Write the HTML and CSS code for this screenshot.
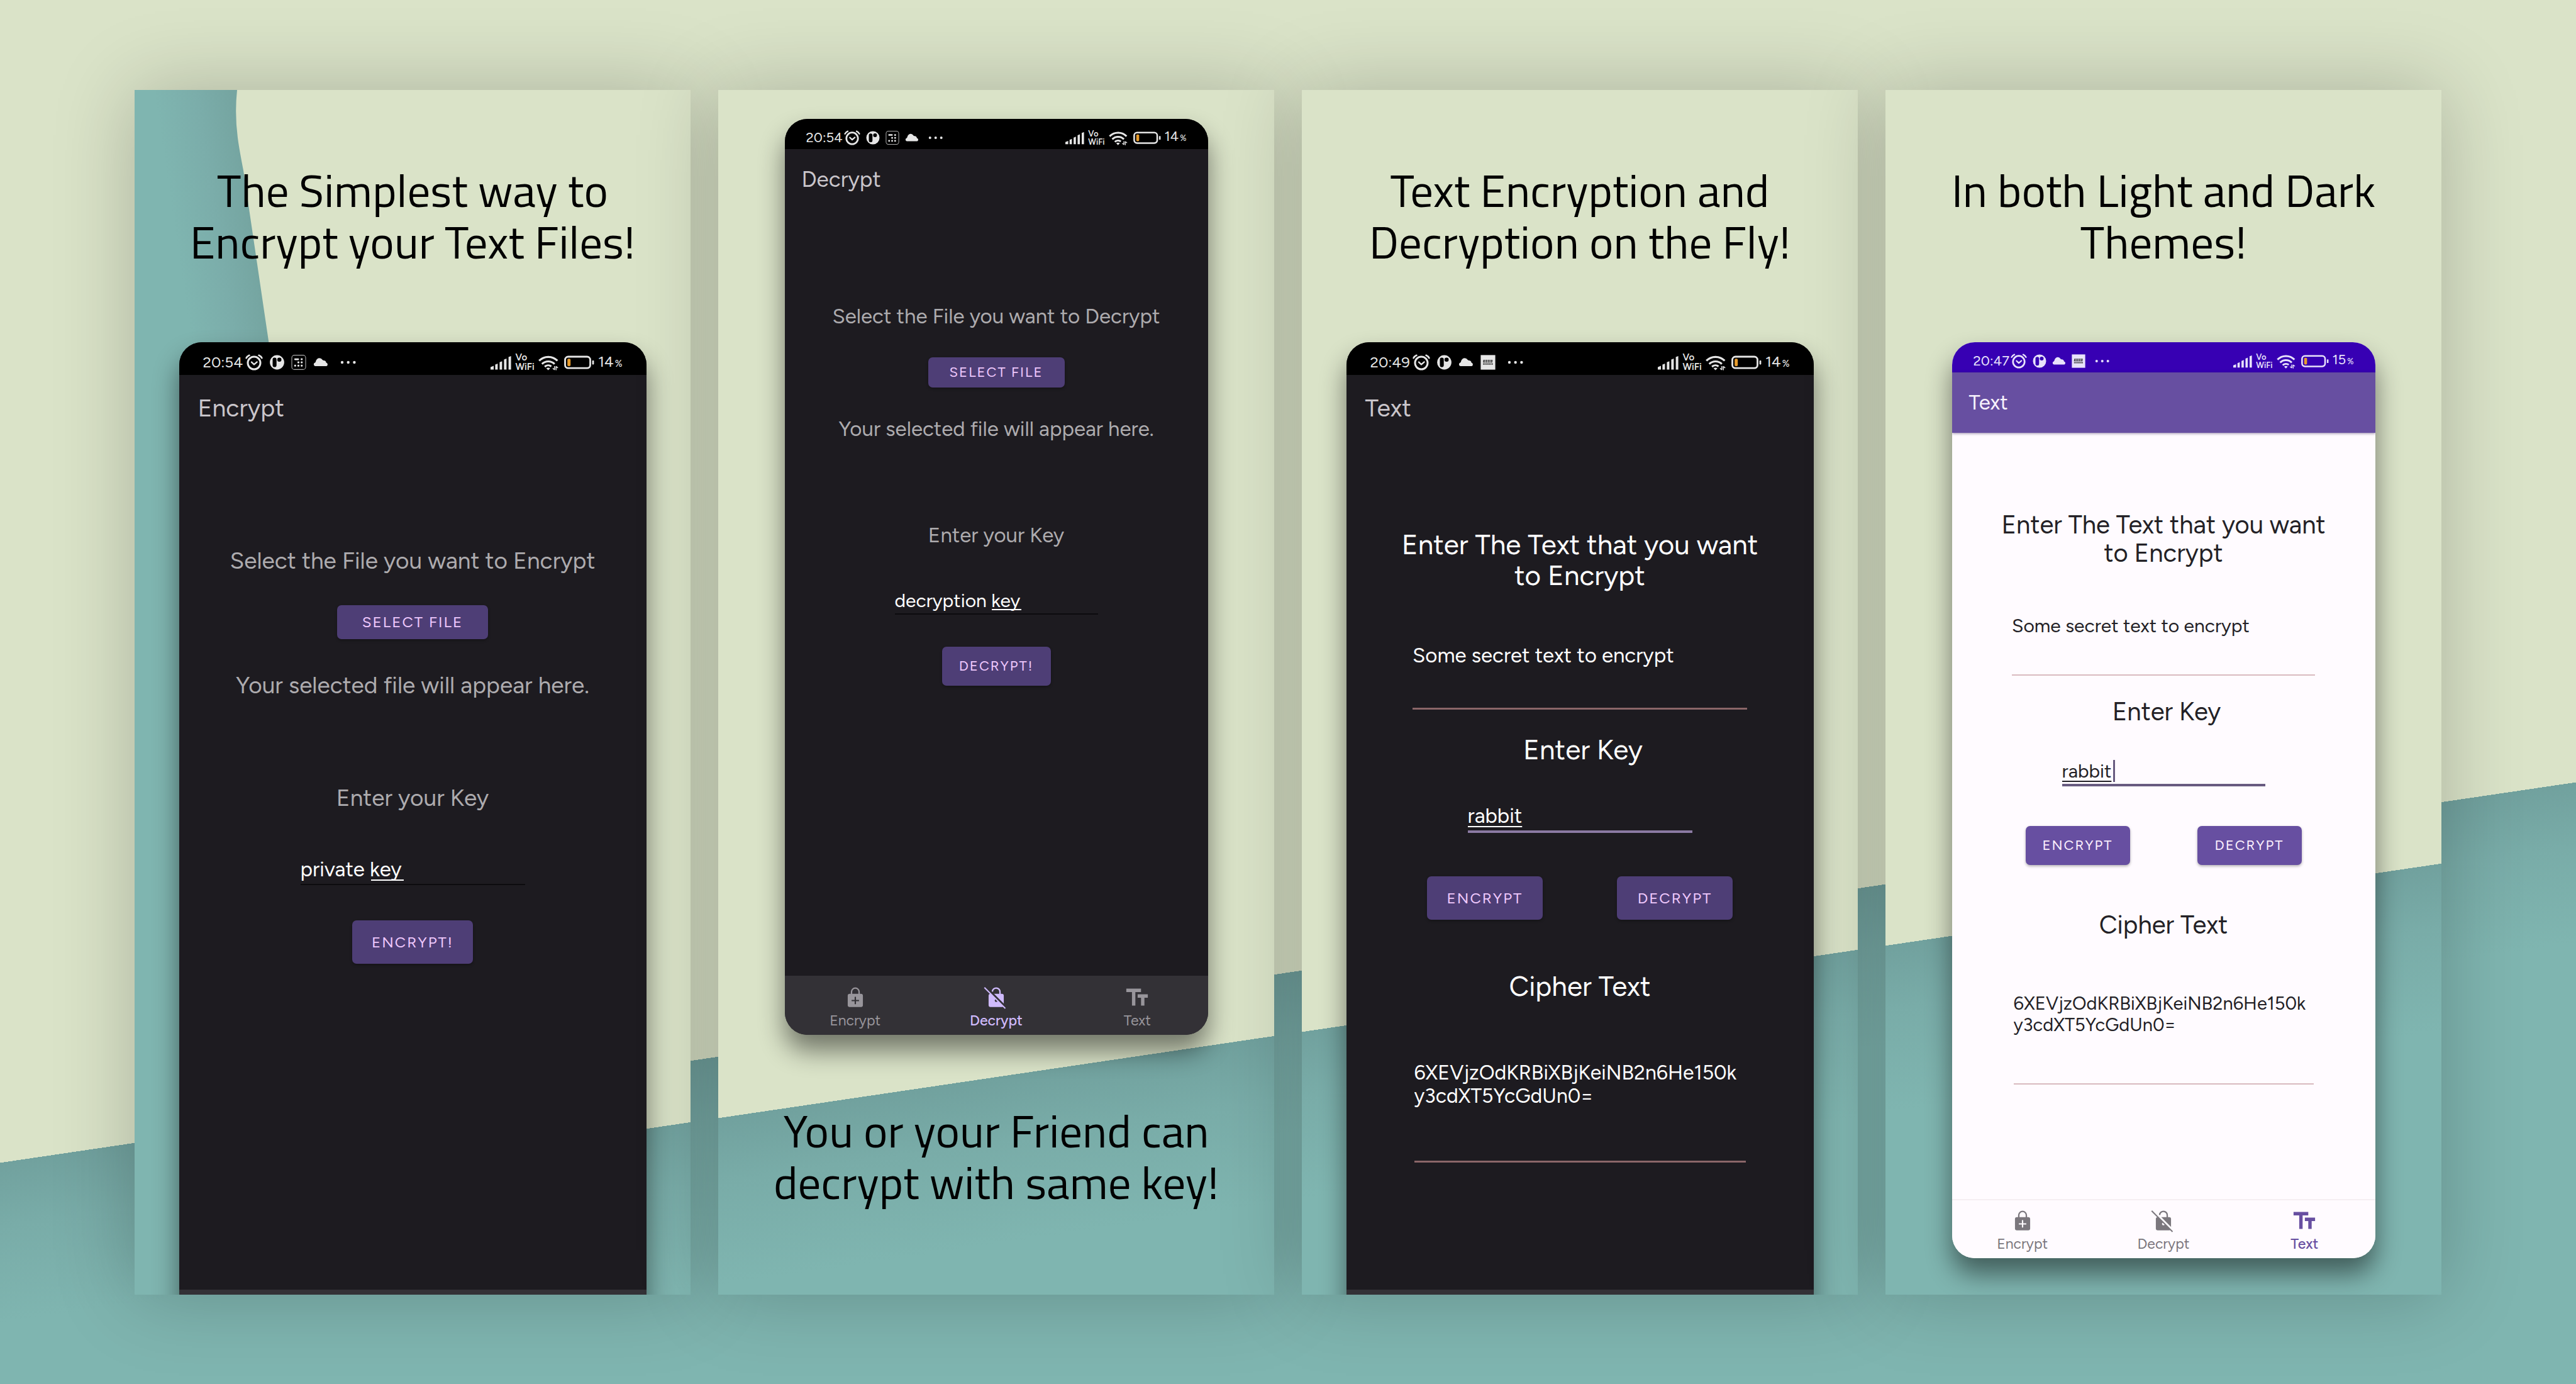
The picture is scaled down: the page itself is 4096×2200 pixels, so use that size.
FILE: index.html
```html
<!DOCTYPE html>
<html lang="en">
<head>
<meta charset="utf-8">
<meta name="viewport" content="width=device-width, initial-scale=1">
<title>Encrypt your Text Files</title>
<link rel="stylesheet" href="styles.css">
</head>
<body>
<svg class="sprite" aria-hidden="true">
  <symbol id="i-alarm" viewBox="0 0 28 26">
    <g fill="none" stroke="currentColor" stroke-linecap="round" stroke-linejoin="round">
      <circle cx="14" cy="14" r="10" stroke-width="3"/>
      <path d="M1.6 6.2Q3.2 3.2 6.4 1.8M26.4 6.2Q24.8 3.2 21.6 1.8" stroke-width="2.6"/>
      <path d="M10 12.6l4 3.8 4.6-4" stroke-width="2.4"/>
    </g>
  </symbol>
  <symbol id="i-disc" viewBox="0 0 23 26">
    <path fill="currentColor" fill-rule="evenodd" d="M11.5 1.6a11.4 11.4 0 1 1 0 22.8a11.4 11.4 0 0 1 0-22.8zM7.6 5.6a3.1 3.1 0 0 0-3.1 3.1v8.8a3.1 3.1 0 0 0 6.2 0V8.7a3.1 3.1 0 0 0-3.1-3.1zM15.2 5.4a3.3 3.3 0 1 0 0 6.6a3.3 3.3 0 0 0 0-6.6z"/>
  </symbol>
  <symbol id="i-calc" viewBox="0 0 24 26">
    <rect x="1" y="1.6" width="22" height="22.8" rx="4" fill="none" stroke="currentColor" stroke-width="1.1" opacity=".75"/>
    <g fill="currentColor">
      <rect x="5" y="6.8" width="7.4" height="2.6" rx=".8"/>
      <rect x="15.2" y="6.6" width="3" height="3" rx="1"/>
      <rect x="10" y="11.6" width="3" height="3" rx="1"/><rect x="15.2" y="11.6" width="3" height="3" rx="1"/>
      <rect x="4.8" y="16.8" width="3" height="3" rx="1"/><rect x="10" y="16.8" width="3" height="3" rx="1"/><rect x="15.2" y="16.8" width="3" height="3" rx="1"/>
    </g>
  </symbol>
  <symbol id="i-cloud" viewBox="0 0 24 26">
    <path fill="currentColor" d="M3 19.1a3 3 0 0 1 .2-5.8C4 12.6 4 10.8 5 9.2A5.4 5.4 0 0 1 14.2 8.6Q15.2 10 16.6 10Q20.4 10.2 20.6 13.6A2.9 2.9 0 0 1 21.2 19.1z"/>
  </symbol>
  <symbol id="i-news" viewBox="0 0 24 26">
    <rect x=".4" y="1.4" width="23.2" height="23.2" fill="currentColor"/>
    <path d="M4.6 9h14.8l-.5 4.2H4z" fill="#222" opacity=".85"/>
    <path d="M7.6 9v4.2M11.4 9v4.2M15.2 9v4.2M5.4 11h13" stroke="currentColor" stroke-width=".7"/>
    <path d="M4.2 15.6h15.6" stroke="#333" stroke-width="2.2" stroke-dasharray="1.6 .7"/>
  </symbol>
  <symbol id="i-more" viewBox="0 0 26 26">
    <g fill="currentColor"><circle cx="3" cy="13" r="2.2"/><circle cx="12.7" cy="13" r="2.2"/><circle cx="22.4" cy="13" r="2.2"/></g>
  </symbol>
  <symbol id="i-signal" viewBox="0 0 33 26">
    <path fill="currentColor" d="M0 20.5l5-2v5.9H0zM7.4 16.6l4-1.6v9.4h-4zM14.4 12.8l4-1.6v13.2h-4zM21.4 8.6l4-1.6v17.4h-4zM28.6 4.6l4-1.6v21.4h-4z"/>
  </symbol>
  <symbol id="i-wifi" viewBox="0 0 32 26">
    <g fill="none" stroke="currentColor" stroke-width="3.2">
      <path d="M1.2 10.4A20.5 20.5 0 0 1 30.4 10.4"/>
      <path d="M5.8 15.6A14.2 14.2 0 0 1 25.8 15.6"/>
      <path d="M10.2 20A8 8 0 0 1 20.6 19.4"/>
    </g>
    <path fill="currentColor" d="M12.6 22.4q3.1-2 6.2 0l-3.1 3.2z"/>
    <path fill="none" stroke="currentColor" stroke-width="1.5" d="M25.8 19v5.8M28.2 25.6v-6.4M26 25l-3-2.6M28.2 19.4l3 2.6"/>
  </symbol>
  <symbol id="i-battery" viewBox="0 0 48 26">
    <rect x="1.5" y="4" width="40" height="18.2" rx="5" fill="none" stroke="currentColor" stroke-width="2.8"/>
    <rect x="44.6" y="10" width="2.8" height="6.4" rx=".8" fill="currentColor"/>
    <rect x="5.2" y="7.2" width="5" height="11.8" rx="1.8" fill="#e89c2c"/>
  </symbol>
  <symbol id="i-lock" viewBox="-1.25 -1.75 26.5 26.5">
    <path fill="none" stroke="currentColor" stroke-width="1.5" d="M8 8.5V6a4 4 0 0 1 8 0v2.5"/>
    <path fill="currentColor" fill-rule="evenodd" d="M6 8h12a2 2 0 0 1 2 2v10a2 2 0 0 1-2 2H6a2 2 0 0 1-2-2V10a2 2 0 0 1 2-2zM11.3 11.2v3.2H8.1v1.4h3.2v3.2h1.4v-3.2h3.2v-1.4h-3.2v-3.2z"/>
  </symbol>
  <symbol id="i-unlock" viewBox="-1.25 -1.75 26.5 26.5">
    <path fill="none" stroke="currentColor" stroke-width="1.5" d="M8 5.8a4 4 0 0 1 8 .2v2.5"/>
    <path fill="currentColor" fill-rule="evenodd" d="M6 8h12a2 2 0 0 1 2 2v10a2 2 0 0 1-2 2H6a2 2 0 0 1-2-2V10a2 2 0 0 1 2-2z"/>
    <circle cx="12" cy="15.2" r="1.5" fill="var(--nav)"/>
    <path d="M2.4 2.4L22.6 22.6" stroke="var(--nav)" stroke-width="2.4"/>
    <path d="M-.4 1.4L21.6 23.4" stroke="currentColor" stroke-width="1.3"/>
  </symbol>
  <symbol id="i-text" viewBox=".9 .4 22.2 22.2">
    <path fill="currentColor" d="M2.5 4v3h5v12h3V7h5V4h-13zm19 5h-9v3h3v7h3v-7h3V9z"/>
  </symbol>
</svg>

<main class="gallery">

  <section class="panel panel-1">
    <svg class="wave" viewBox="0 0 884 1915" preserveAspectRatio="none" aria-hidden="true">
      <defs>
        <linearGradient id="fold" gradientUnits="userSpaceOnUse" x1="163" y1="64" x2="43" y2="82">
          <stop offset="0" stop-color="#75a5a1"/><stop offset=".45" stop-color="#7badaa"/><stop offset="1" stop-color="#7fb5b0"/>
        </linearGradient>
      </defs>
      <path fill="url(#fold)" d="M0 0H163Q159 38 164 76Q166 92 173 128L437 1915H0z"/>
    </svg>
    <h1 class="headline">The Simplest way to Encrypt your Text Files!</h1>
    <article class="phone large dark cropped">
      <header class="status">
        <time>20:54</time>
        <svg class="first"><use href="#i-alarm"/></svg><svg class="w-disc"><use href="#i-disc"/></svg><svg class="w-calc"><use href="#i-calc"/></svg><svg class="w-calc"><use href="#i-cloud"/></svg><svg class="w-more"><use href="#i-more"/></svg>
        <div class="radio"><svg class="w-signal"><use href="#i-signal"/></svg><span class="vo">Vo<br>WiFi</span><svg class="w-wifi"><use href="#i-wifi"/></svg><svg class="w-battery"><use href="#i-battery"/></svg><span class="charge">14<small>%</small></span></div>
      </header>
      <h2 class="appbar">Encrypt</h2>
      <form class="screen file">
        <p class="prompt">Select the File you want to Encrypt</p>
        <button type="button" class="btn pick">SELECT FILE</button>
        <p class="result">Your selected file will appear here.</p>
        <label class="keylabel" for="key1">Enter your Key</label>
        <div class="key"><input id="key1" type="text" value="private key"><i class="compose" style="left:112px;width:52px"></i></div>
        <button type="button" class="btn act">ENCRYPT!</button>
      </form>
      <div class="tabs"></div>
    </article>
  </section>

  <section class="panel panel-2">
    <article class="phone small dark">
      <header class="status">
        <time>20:54</time>
        <svg class="first"><use href="#i-alarm"/></svg><svg class="w-disc"><use href="#i-disc"/></svg><svg class="w-calc"><use href="#i-calc"/></svg><svg class="w-calc"><use href="#i-cloud"/></svg><svg class="w-more"><use href="#i-more"/></svg>
        <div class="radio"><svg class="w-signal"><use href="#i-signal"/></svg><span class="vo">Vo<br>WiFi</span><svg class="w-wifi"><use href="#i-wifi"/></svg><svg class="w-battery"><use href="#i-battery"/></svg><span class="charge">14<small>%</small></span></div>
      </header>
      <h2 class="appbar">Decrypt</h2>
      <form class="screen file">
        <p class="prompt">Select the File you want to Decrypt</p>
        <button type="button" class="btn pick">SELECT FILE</button>
        <p class="result">Your selected file will appear here.</p>
        <label class="keylabel" for="key2">Enter your Key</label>
        <div class="key"><input id="key2" type="text" value="decryption key"><i class="compose" style="left:154px;width:47px"></i></div>
        <button type="button" class="btn act">DECRYPT!</button>
      </form>
      <nav class="tabs">
        <a href="#encrypt"><svg><use href="#i-lock"/></svg>Encrypt</a>
        <a class="on" href="#decrypt"><svg><use href="#i-unlock"/></svg>Decrypt</a>
        <a href="#text"><svg><use href="#i-text"/></svg>Text</a>
      </nav>
    </article>
    <h1 class="headline">You or your Friend can decrypt with same key!</h1>
  </section>

  <section class="panel panel-3">
    <h1 class="headline">Text Encryption and Decryption on the Fly!</h1>
    <article class="phone large dark cropped">
      <header class="status">
        <time>20:49</time>
        <svg class="first"><use href="#i-alarm"/></svg><svg class="w-disc"><use href="#i-disc"/></svg><svg class="w-calc"><use href="#i-cloud"/></svg><svg class="w-calc"><use href="#i-news"/></svg><svg class="w-more"><use href="#i-more"/></svg>
        <div class="radio"><svg class="w-signal"><use href="#i-signal"/></svg><span class="vo">Vo<br>WiFi</span><svg class="w-wifi"><use href="#i-wifi"/></svg><svg class="w-battery"><use href="#i-battery"/></svg><span class="charge">14<small>%</small></span></div>
      </header>
      <h2 class="appbar">Text</h2>
      <form class="screen text">
        <label class="title ask" for="plain3">Enter The Text that you want to Encrypt</label>
        <textarea class="plain" id="plain3" spellcheck="false">Some secret text to encrypt</textarea>
        <label class="title keytitle" for="key3">Enter Key</label>
        <div class="key focus"><input id="key3" type="text" value="rabbit"></div>
        <div class="pair"><button type="button" class="btn act">ENCRYPT</button><button type="button" class="btn act">DECRYPT</button></div>
        <label class="title ciphertitle" for="cipher3">Cipher Text</label>
        <textarea class="cipher" id="cipher3" spellcheck="false">6XEVjzOdKRBiXBjKeiNB2n6He150k
y3cdXT5YcGdUn0=</textarea>
      </form>
      <div class="tabs"></div>
    </article>
  </section>

  <section class="panel panel-4">
    <h1 class="headline">In both Light and Dark Themes!</h1>
    <article class="phone small light">
      <header class="status">
        <time>20:47</time>
        <svg class="first"><use href="#i-alarm"/></svg><svg class="w-disc"><use href="#i-disc"/></svg><svg class="w-calc"><use href="#i-cloud"/></svg><svg class="w-calc"><use href="#i-news"/></svg><svg class="w-more"><use href="#i-more"/></svg>
        <div class="radio"><svg class="w-signal"><use href="#i-signal"/></svg><span class="vo">Vo<br>WiFi</span><svg class="w-wifi"><use href="#i-wifi"/></svg><svg class="w-battery"><use href="#i-battery"/></svg><span class="charge">15<small>%</small></span></div>
      </header>
      <h2 class="appbar">Text</h2>
      <form class="screen text">
        <label class="title ask" for="plain4">Enter The Text that you want to Encrypt</label>
        <textarea class="plain" id="plain4" spellcheck="false">Some secret text to encrypt</textarea>
        <label class="title keytitle" for="key4">Enter Key</label>
        <div class="key focus"><input id="key4" type="text" value="rabbit"><i class="caret" style="left:81px"></i></div>
        <div class="pair"><button type="button" class="btn act">ENCRYPT</button><button type="button" class="btn act">DECRYPT</button></div>
        <label class="title ciphertitle" for="cipher4">Cipher Text</label>
        <textarea class="cipher" id="cipher4" spellcheck="false">6XEVjzOdKRBiXBjKeiNB2n6He150k
y3cdXT5YcGdUn0=</textarea>
      </form>
      <nav class="tabs">
        <a href="#encrypt"><svg><use href="#i-lock"/></svg>Encrypt</a>
        <a href="#decrypt"><svg><use href="#i-unlock"/></svg>Decrypt</a>
        <a class="on" href="#text"><svg><use href="#i-text"/></svg>Text</a>
      </nav>
    </article>
  </section>

</main>
</body>
</html>
```
FILE: styles.css
```css
:root {
  --cream: #dae3c8;
  --teal: #7fb5b0;
  --teal-mid: #79aca8;
  --teal-deep: #71a19e;
}

* { box-sizing: border-box; margin: 0; padding: 0; }

body {
  min-height: 100vh;
  font-family: Figtree, Lato, sans-serif;
  background: linear-gradient(171.6deg, var(--cream) 65.9%, var(--teal-deep) 65.9%, var(--teal-mid) 69.5%, var(--teal) 75%);
}

.sprite { display: none; }

.gallery {
  display: grid;
  grid-template-columns: repeat(4, 1fr);
  gap: 44px;
  min-height: 100vh;
  padding: 143px 214px 142px;
}

/* Panels: each shows the next slice of one long diagonal */
.panel {
  position: relative;
  display: flex;
  flex-direction: column;
  align-items: center;
  overflow: hidden;
  padding-top: 118px;
  background: linear-gradient(171.6deg, var(--cream) var(--edge), var(--teal-deep) var(--edge), var(--teal-mid) calc(var(--edge) + 5%), var(--teal) calc(var(--edge) + 13%));
  box-shadow: 0 0 120px rgba(0, 0, 0, .22);
}
.panel-1 { --edge: 86.6%; }
.panel-2 { --edge: 79.9%; padding-top: 46px; }
.panel-3 { --edge: 73.2%; }
.panel-4 { --edge: 66.5%; }

.wave { position: absolute; inset: 0; width: 100%; height: 100%; }

.headline {
  position: relative;
  max-width: 744px;
  margin-bottom: 119px;
  font: 400 73px/82px "Titillium Web", "Open Sans", sans-serif;
  text-align: center;
  color: #000;
}
.panel-2 .headline { margin: 111px 0 0; }

/* Phone */
.phone {
  position: relative;
  display: flex;
  flex-direction: column;
  width: 100%;
  overflow: hidden;
  border-radius: 36px;
  background: var(--bg);
  box-shadow: 0 25px 40px rgba(0, 0, 0, .48);
}
.cropped { margin-bottom: -94px; }

.dark {
  --bg: #1d1b20;
  --nav: #333136;
  --status: #000;
  --status-ink: #e6e6e6;
  --bar: #1d1b20;
  --bar-ink: #c9c5ca;
  --prompt: #adabae;
  --ink: #fff;
  --rule: #8b6668;
  --key-rule: #0c0b0e;
  --focus: #8b7aa3;
  --btn: #4e3e76;
  --btn-ink: #efc8fd;
  --tab: #98959b;
  --tab-on: #cfbafc;
  --nav-line: #333136;
}
.light {
  --bg: #fffbff;
  --nav: #fffbff;
  --status: #3700b3;
  --status-ink: #e8e2fb;
  --bar: #674fa1;
  --bar-ink: #f7f2fc;
  --prompt: #1d1b20;
  --ink: #232126;
  --rule: #d9babf;
  --key-rule: #1d1b20;
  --focus: #685b80;
  --btn: #674fa1;
  --btn-ink: #fbeffd;
  --tab: #7b777d;
  --tab-on: #674fa1;
  --nav-line: #f6eef3;
}

/* Two phone sizes */
.large {
  max-width: 743px; height: 1608px;
  --status-h: 52px; --status-pad: 12px; --side: 38px; --clock: 24px; --icon: 26px; --vo: 15px; --pct: 15px;
  --bar-h: 106px; --bar-pad: 30px; --bar-size: 39px;
  --copy: 37px; --copy-lh: 44px;
  --head: 44px; --head-lh: 49px; --head-w: 590px;
  --field: 33px; --field-h: 40px; --field-w: 357px; --field-pad: 3px;
  --area: 33px; --cipher: 32px; --area-lh: 37px; --plain-w: 532px; --plain-h: 105px; --cipher-w: 527px; --cipher-h: 161px;
  --btn-size: 24px; --pick-w: 240px; --pick-h: 54px; --act-w: 192px; --act-h: 69px; --pair-w: 184px; --pair-gap: 118px;
  --nav-h: 102px; --rule-w: 3px;
  --g1: 167px; --g2: 49px; --g3: 51px; --g4: 135px; --g5: 72px; --g6: 56px;
  --t1: 139px; --t2: 84px; --t3: 39px; --t4: 61px; --t5: 69px; --t6: 81px; --t7: 95px;
}
.small {
  max-width: 673px; height: 1456px;
  --status-h: 48px; --status-pad: 11px; --side: 34px; --clock: 22px; --icon: 24px; --vo: 13px; --pct: 13px;
  --bar-h: 96px; --bar-pad: 27px; --bar-size: 35px;
  --copy: 33px; --copy-lh: 40px;
  --head: 40px; --head-lh: 45px; --head-w: 530px;
  --field: 30px; --field-h: 36px; --field-w: 323px; --field-pad: 2px;
  --area: 30px; --cipher: 29px; --area-lh: 34px; --plain-w: 482px; --plain-h: 96px; --cipher-w: 477px; --cipher-h: 146px;
  --btn-size: 22px; --pick-w: 217px; --pick-h: 48px; --act-w: 173px; --act-h: 62px; --pair-w: 166px; --pair-gap: 107px;
  --nav-h: 94px; --tab-icon: 40px; --tab-size: 23px; --rule-w: 2px;
  --g1: 150px; --g2: 45px; --g3: 46px; --g4: 129px; --g5: 66px; --g6: 51px;
  --t1: 124px; --t2: 76px; --t3: 35px; --t4: 54px; --t5: 63px; --t6: 73px; --t7: 85px;
}
.light { --bar-size: 33px; }

/* Status bar */
.status {
  display: flex;
  align-items: center;
  gap: 11px;
  height: var(--status-h);
  padding: var(--status-pad) var(--side) 0;
  background: var(--status);
  color: var(--status-ink);
  font-size: var(--clock);
  line-height: var(--icon);
}
.status svg { display: block; flex: none; height: var(--icon); }
.status .first { width: 28px; margin-left: -7px; }
.w-disc { width: 23px; }
.w-calc { width: 24px; }
.w-more { width: 26px; margin-left: 8px; }
.w-signal { width: 33px; }
.w-wifi { width: 32px; }
.w-battery { width: 48px; margin-left: 3px; }
.small .first { width: 26px; }
.small .w-disc, .small .w-calc { width: 22px; }
.small .w-more { width: 24px; margin-left: 6px; }
.small .w-signal, .small .w-wifi { width: 30px; }
.small .w-battery { width: 44px; }
.small .status { gap: 9px; }
.radio { display: flex; align-items: center; gap: 6px; margin-left: auto; }
.vo { font-size: var(--vo); font-weight: 600; line-height: var(--vo); }
.charge small { margin-left: 2px; font-size: var(--pct); }

.appbar {
  height: var(--bar-h);
  padding-left: var(--bar-pad);
  background: var(--bar);
  color: var(--bar-ink);
  font-size: var(--bar-size);
  font-weight: 400;
  line-height: var(--bar-h);
}
.light .appbar { position: relative; box-shadow: 0 1px 4px rgba(40, 20, 80, .5); }

/* Screens */
.screen { flex: 1; display: flex; flex-direction: column; align-items: center; }

.prompt, .result, .keylabel { font-size: var(--copy); line-height: var(--copy-lh); color: var(--prompt); }
.prompt { margin-top: var(--g1); }
.pick { margin-top: var(--g2); }
.result { margin-top: var(--g3); }
.keylabel { margin-top: var(--g4); }
.file .key { margin-top: var(--g5); }
.file .act { margin-top: var(--g6); }

.title { font-size: var(--head); line-height: var(--head-lh); color: var(--ink); text-align: center; }
.ask { max-width: var(--head-w); margin-top: var(--t1); }
.plain { margin-top: var(--t2); }
.keytitle { margin-top: var(--t3); padding-left: 10px; }
.text .key { margin-top: var(--t4); }
.pair { display: flex; gap: var(--pair-gap); margin-top: var(--t5); }
.ciphertitle { margin-top: var(--t6); }
.cipher { margin-top: var(--t7); }

.key { position: relative; width: var(--field-w); padding-bottom: var(--field-pad); border-bottom: 2px solid var(--key-rule); }
.key.focus { border-bottom: 4px solid var(--focus); }
.key input {
  display: block;
  width: 100%;
  height: var(--field-h);
  border: 0;
  outline: 0;
  background: none;
  color: var(--ink);
  font: 400 var(--field)/var(--field-h) Figtree, Lato, sans-serif;
}
.focus input { text-decoration: underline 2px; text-underline-offset: 5px; text-decoration-skip-ink: none; }
.compose { position: absolute; bottom: 5px; height: 2px; background: var(--ink); }
.caret { position: absolute; top: 0; width: 3px; height: 35px; background: var(--focus); }

textarea {
  display: block;
  border: 0;
  border-bottom: var(--rule-w) solid var(--rule);
  outline: 0;
  resize: none;
  overflow: hidden;
  background: none;
  color: var(--ink);
  font: 400 var(--area)/var(--area-lh) Figtree, Lato, sans-serif;
}
.plain { width: var(--plain-w); height: var(--plain-h); }
.cipher { width: var(--cipher-w); height: var(--cipher-h); font-size: var(--cipher); white-space: pre; }

.btn {
  border: 0;
  border-radius: 7px;
  background: var(--btn);
  color: var(--btn-ink);
  font: 400 var(--btn-size)/1 Figtree, Lato, sans-serif;
  letter-spacing: 2px;
  box-shadow: 0 2px 4px rgba(0, 0, 0, .3);
}
.pick { width: var(--pick-w); height: var(--pick-h); }
.act { width: var(--act-w); height: var(--act-h); }
.pair .act { width: var(--pair-w); }

/* Bottom navigation */
.tabs { display: flex; height: var(--nav-h); border-top: 2px solid var(--nav-line); background: var(--nav); }
.tabs a {
  flex: 1;
  display: flex;
  flex-direction: column;
  align-items: center;
  gap: 4px;
  padding-top: 12px;
  color: var(--tab);
  font-size: var(--tab-size);
  line-height: 26px;
  text-decoration: none;
}
.tabs svg { display: block; width: var(--tab-icon); height: var(--tab-icon); }
.tabs .on { color: var(--tab-on); font-weight: 500; }
```
